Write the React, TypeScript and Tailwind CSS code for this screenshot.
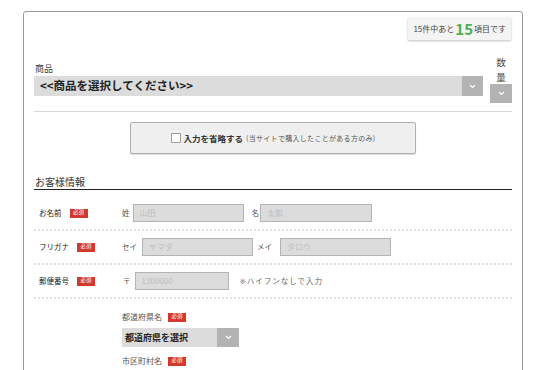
const jp = "font-['Noto_Sans_CJK_JP','Noto_Sans',sans-serif]";

function Chevron() {
  return (
    <svg width="7" height="5" viewBox="0 0 7 5" fill="none">
      <polyline points="1,1 3.5,3.5 6,1" stroke="#fff" strokeWidth="1.2" />
    </svg>
  );
}

function Required() {
  return (
    <span className="inline-flex h-[9px] w-[18px] items-center justify-center bg-[#d2392c] text-[5.5px] leading-none text-white">
      必須
    </span>
  );
}

function Field({ w, placeholder }: { w: string; placeholder: string }) {
  return (
    <div
      className={`flex h-[18px] items-center border border-[#b4b4b4] bg-[#dcdcdc] pl-[6px] text-[8px] text-[#bcbcbc] ${w}`}
    >
      {placeholder}
    </div>
  );
}

function Row({ label, children }: { label: string; children: React.ReactNode }) {
  return (
    <div className="flex h-[34px] items-center border-b-2 border-dotted border-[#e2e2e2]">
      <div className="flex w-[86px] items-center gap-[8px] pl-[5px] text-[7.5px] text-[#222]">
        <span>{label}</span>
        <Required />
      </div>
      <div className="flex flex-1 items-center pl-[2px] text-[7.5px] text-[#555]">{children}</div>
    </div>
  );
}

export default function App() {
  return (
    <div className={`h-[370px] overflow-hidden bg-white pl-[23px] pt-[11px] ${jp}`}>
      <div className="w-[500px] rounded-t-[3px] border border-[#9a9a9a] px-[10px] pb-[40px] pt-[5px]">
        <div className="flex justify-end">
          <div className="mr-[1px] flex h-[23px] items-center bg-[#f4f4f4] px-[5px] text-[8px] text-[#444] shadow-[0_1px_2px_rgba(0,0,0,0.25)]">
            <span>15件中あと</span>
            <span className="mx-[1px] text-[15px] font-bold leading-none text-[#4cb050]">15</span>
            <span>項目です</span>
          </div>
        </div>

        <div className="mt-[15px] flex gap-[7px] border-b border-[#d6d6d6] pb-[8px]">
          <div className="flex flex-1 flex-col pt-[8px]">
            <div className="h-[12px] pl-[1px] text-[9px] leading-[12px] text-[#444]">商品</div>
            <div className="mt-[1px] flex h-[20px] items-stretch bg-[#dcdcdc]">
              <div className="flex flex-1 items-center pl-[6px] text-[11.5px] font-bold text-[#222]">
                {"<<商品を選択してください>>"}
              </div>
              <div className="flex w-[21px] items-center justify-center bg-[#b3b3b3]">
                <Chevron />
              </div>
            </div>
          </div>
          <div className="flex w-[22px] flex-col items-center text-[9.5px] text-[#444]">
            <div className="h-[15px] leading-[15px]">数</div>
            <div className="h-[14px] leading-[14px]">量</div>
            <div className="flex h-[19px] w-[22px] items-center justify-center bg-[#b3b3b3]">
              <Chevron />
            </div>
          </div>
        </div>

        <div className="mt-[10px] flex justify-center">
          <div className="flex h-[32px] w-[286px] items-center justify-center rounded-[2px] border border-[#b0b0b0] bg-[#efefef] shadow-[0_1px_1px_rgba(0,0,0,0.15)]">
            <span className="mr-[3px] h-[10px] w-[10px] border border-[#a0a0a0] bg-white" />
            <span className="text-[8.5px] font-bold text-[#333]">入力を省略する</span>
            <span className="ml-[3px] text-[7px] tracking-[0.3px] text-[#555]">
              (当サイトで購入したことがある方のみ)
            </span>
          </div>
        </div>

        <div className="mt-[21px] h-[15px] border-b border-[#222] pl-[1px] text-[10px] leading-[14px] text-[#333]">
          お客様情報
        </div>

        <div className="mt-[7px]">
          <Row label="お名前">
            <span className="mr-[3px]">姓</span>
            <Field w="w-[111px]" placeholder="山田" />
            <span className="ml-[8px] mr-[1px]">名</span>
            <Field w="w-[112px]" placeholder="太郎" />
          </Row>
          <Row label="フリガナ">
            <span className="mr-[5px]">セイ</span>
            <Field w="w-[111px]" placeholder="ヤマダ" />
            <span className="ml-[4px] mr-[8px]">メイ</span>
            <Field w="w-[111px]" placeholder="タロウ" />
          </Row>
          <Row label="郵便番号">
            <span className="mr-[4px] pl-[1px]">〒</span>
            <Field w="w-[94px]" placeholder="1300000" />
            <span className="ml-[11px] text-[7.5px] tracking-[1px] text-[#666]">
              <span className="font-['DejaVu_Sans',sans-serif] text-[#777]">{"\u203B\uFE0E"}</span>ハイフンなしで入力
            </span>
          </Row>

          <div className="flex pt-[12px]">
            <div className="w-[86px]" />
            <div className="flex flex-col pl-[2px]">
              <div className="flex h-[12px] items-center gap-[6px] text-[8px] text-[#555]">
                <span>都道府県名</span>
                <Required />
              </div>
              <div className="mt-[5px] flex h-[19px] w-[117px] bg-[#dcdcdc]">
                <div className="flex flex-1 items-center pl-[3px] text-[9px] font-bold text-[#222]">
                  都道府県を選択
                </div>
                <div className="flex w-[22px] items-center justify-center bg-[#b3b3b3]">
                  <Chevron />
                </div>
              </div>
              <div className="mt-[8px] flex h-[12px] items-center gap-[6px] text-[8px] text-[#555]">
                <span>市区町村名</span>
                <Required />
              </div>
              <div className="mt-[5px] h-[18px] w-[200px] border border-[#b4b4b4] bg-[#dcdcdc]" />
            </div>
          </div>
        </div>
      </div>
    </div>
  );
}
